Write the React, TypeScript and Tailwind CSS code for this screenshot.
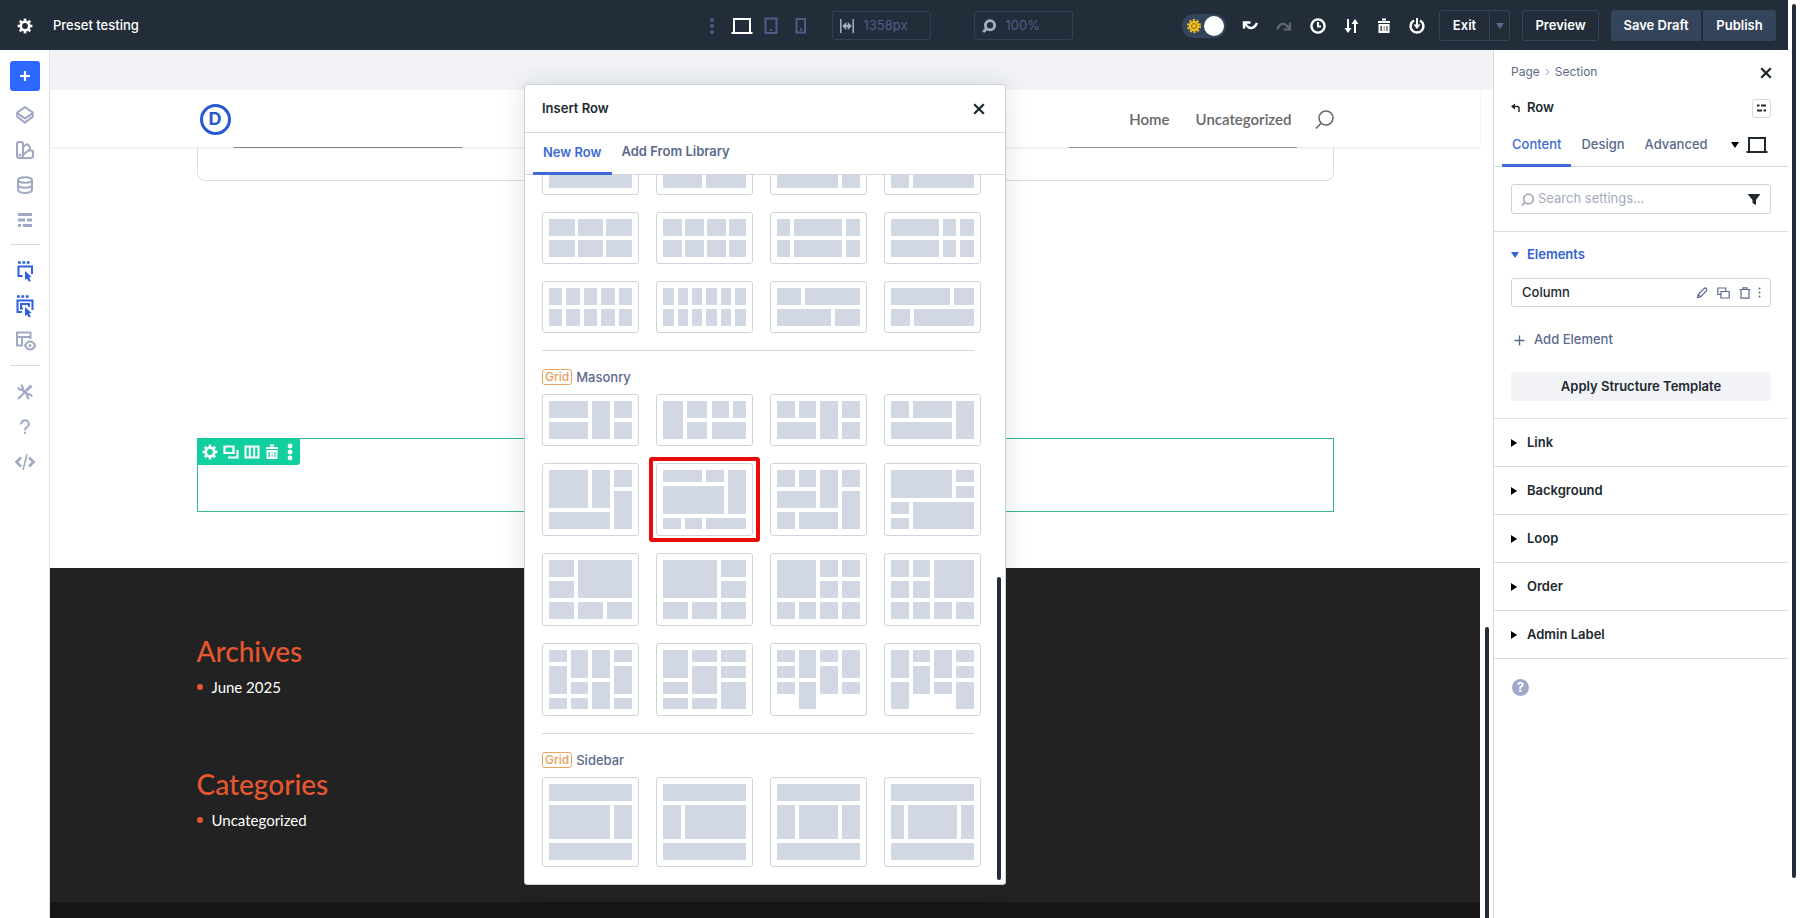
import { useState } from "react";
import type { ReactNode } from "react";

type Block = [number, number, number, number];

type LayoutRow = {
  height: number;
  items: Block[][];
};

// one column of blocks sharing the same x and width
const col = (x: number, w: number, spans: [number, number][]): Block[] =>
  spans.map(([y, h]) => [x, y, w, h] as Block);

// the same columns repeated on two lines
const twice = (cols: [number, number][]): Block[] =>
  cols.flatMap(([x, w]) => col(x, w, [[0, 17], [21, 17]]));

const THIRDS: [number, number][] = [[0, 17], [21, 17], [42, 17]];

const gridRows: LayoutRow[] = [
  {
    height: 38,
    items: [
      twice([[0, 83]]),
      twice([[0, 39], [43, 40]]),
      twice([[0, 61], [65, 18]]),
      twice([[0, 18], [22, 61]]),
    ],
  },
  {
    height: 38,
    items: [
      twice([[0, 26], [29, 25], [57, 26]]),
      twice([[0, 19], [22, 19], [44, 19], [66, 17]]),
      twice([[0, 13], [17, 48], [69, 14]]),
      twice([[0, 48], [52, 13], [69, 14]]),
    ],
  },
  {
    height: 38,
    items: [
      twice([[0, 13], [17, 14], [35, 13], [52, 14], [70, 13]]),
      twice([[0, 11], [15, 10], [29, 10], [43, 11], [58, 10], [72, 11]]),
      [[0, 0, 24, 17], [28, 0, 55, 17], [0, 21, 54, 17], [58, 21, 25, 17]],
      [[0, 0, 59, 17], [63, 0, 20, 17], [0, 21, 19, 17], [23, 21, 60, 17]],
    ],
  },
];

const masonryRows: LayoutRow[] = [
  {
    height: 38,
    items: [
      [...twice([[0, 39], [65, 18]]), [43, 0, 18, 38]],
      [[0, 0, 20, 38], ...twice([[24, 20]]), [49, 0, 17, 17], [70, 0, 13, 17], [49, 21, 34, 17]],
      [[0, 0, 18, 17], [22, 0, 17, 17], [0, 21, 39, 17], [43, 0, 18, 38], ...twice([[65, 18]])],
      [[0, 0, 18, 17], [22, 0, 39, 17], [0, 21, 61, 17], [65, 0, 18, 38]],
    ],
  },
  {
    height: 59,
    items: [
      [[0, 0, 39, 38], [43, 0, 18, 38], [65, 0, 18, 17], [65, 21, 18, 38], [0, 42, 61, 17]],
      [
        [0, 0, 39, 12], [43, 0, 18, 12], [65, 0, 18, 44], [0, 16, 61, 28],
        [0, 48, 18, 11], [22, 48, 17, 11], [43, 48, 40, 11],
      ],
      [
        [0, 0, 18, 17], [22, 0, 17, 17], [0, 21, 39, 17], [43, 0, 18, 38],
        [65, 0, 18, 17], [65, 21, 18, 38], [0, 42, 18, 17], [22, 42, 39, 17],
      ],
      [
        [0, 0, 61, 28], [65, 0, 18, 12], [65, 16, 18, 12],
        [0, 32, 18, 12], [0, 48, 18, 11], [22, 32, 61, 27],
      ],
    ],
  },
  {
    height: 59,
    items: [
      [...col(0, 25, THIRDS), [29, 0, 54, 38], [29, 42, 25, 17], [58, 42, 25, 17]],
      [[0, 0, 54, 38], [0, 42, 25, 17], [29, 42, 25, 17], ...col(58, 25, THIRDS)],
      [[0, 0, 39, 38], [0, 42, 18, 17], [22, 42, 17, 17], ...col(43, 18, THIRDS), ...col(65, 18, THIRDS)],
      [...col(0, 18, THIRDS), ...col(22, 17, THIRDS), [43, 0, 40, 38], [43, 42, 18, 17], [65, 42, 18, 17]],
    ],
  },
  {
    height: 59,
    items: [
      [
        ...col(0, 18, [[0, 12], [16, 28], [48, 11]]),
        ...col(22, 17, [[0, 28], [32, 12], [48, 11]]),
        ...col(43, 18, [[0, 28], [32, 27]]),
        ...col(65, 18, [[0, 12], [16, 28], [48, 11]]),
      ],
      [
        ...col(0, 25, [[0, 28], [32, 12], [48, 11]]),
        ...col(29, 25, [[0, 12], [16, 28], [48, 11]]),
        ...col(58, 25, [[0, 12], [16, 12], [32, 27]]),
      ],
      [
        ...col(0, 18, [[0, 12], [16, 12], [32, 12]]),
        ...col(22, 17, [[0, 28], [32, 27]]),
        ...col(43, 18, [[0, 12], [16, 28]]),
        ...col(65, 18, [[0, 28], [32, 12]]),
      ],
      [
        ...col(0, 18, [[0, 28], [32, 27]]),
        ...col(22, 17, [[0, 12], [16, 28]]),
        ...col(43, 18, [[0, 28], [32, 12]]),
        ...col(65, 18, [[0, 12], [16, 12], [32, 27]]),
      ],
    ],
  },
];

const sidebarCard = (middle: [number, number][]): Block[] => [
  [0, 0, 83, 17],
  ...middle.map(([x, w]) => [x, 21, w, 34] as Block),
  [0, 59, 83, 17],
];

const sidebarRows: LayoutRow[] = [
  {
    height: 76,
    items: [
      sidebarCard([[0, 61], [65, 18]]),
      sidebarCard([[0, 18], [22, 61]]),
      sidebarCard([[0, 18], [22, 39], [65, 18]]),
      sidebarCard([[0, 13], [17, 49], [70, 13]]),
    ],
  },
];

/* ---------- icons ---------- */

function Icon({ w = 18, h = w, sw = 2, children }: { w?: number; h?: number; sw?: number; children: ReactNode }) {
  return (
    <svg
      width={w} height={h} viewBox={`0 0 ${w} ${h}`} fill="none"
      stroke="currentColor" strokeWidth={sw} aria-hidden className="shrink-0"
    >
      {children}
    </svg>
  );
}

function Gear() {
  return (
    <Icon w={16} sw={2.6}>
      <circle cx="8" cy="8" r="4.2" />
      {[0, 45, 90, 135, 180, 225, 270, 315].map((a) => (
        <path key={a} d="M8 0.6v2.6" transform={`rotate(${a} 8 8)`} />
      ))}
    </Icon>
  );
}

function Trash() {
  return (
    <Icon w={14} h={16}>
      <path d="M1 4h12M5 1.5h4" />
      <path d="M2.5 7v7h9V7zM5.8 8v5M8.4 8v5" />
    </Icon>
  );
}

function Close() {
  return (
    <Icon w={12} sw={2.3}>
      <path d="M1.2 1.2l9.6 9.6M10.8 1.2L1.2 10.8" />
    </Icon>
  );
}

function Laptop() {
  return (
    <Icon w={22} h={18}>
      <path d="M3 15V2h16v13M0.5 16h21" />
    </Icon>
  );
}

function Lens() {
  return (
    <Icon w={14} sw={2.8}>
      <circle cx="8" cy="6.2" r="4.6" />
      <path d="M4.6 9.6L1.2 13" />
    </Icon>
  );
}

function VDots({ r = 2 }: { r?: number }) {
  return (
    <svg width="6" height="18" viewBox="0 0 6 18" fill="currentColor" aria-hidden className="shrink-0">
      <circle cx="3" cy="3" r={r} />
      <circle cx="3" cy="9" r={r} />
      <circle cx="3" cy="15" r={r} />
    </svg>
  );
}

const Layers = () => (
  <Icon>
    <path d="M9 1.2L16.6 6.4a.6.6 0 010 1L9 12.4 1.4 7.4a.6.6 0 010-1z" strokeLinejoin="round" />
    <path d="M1.2 7v3.6L9 16.6l7.800-6V7" strokeLinejoin="round" />
  </Icon>
);

const Swatches = () => (
  <Icon>
    <rect x="1" y="1" width="6" height="16" rx="2" />
    <path d="M7 6l3-2.300a1.800 1.800 0 012.600.400l1.200 1.700a2 2 0 01-.4 2.600L7 14" />
    <path d="M13 9.400l2.200-.2a1.800 1.800 0 011.800 1.800v3.600A2.200 2.200 0 0114.800 17H5" />
    <circle cx="4" cy="14" r=".5" />
  </Icon>
);

const Database = () => (
  <Icon>
    <ellipse cx="9" cy="4" rx="7" ry="2.8" />
    <path d="M2 4v10c0 1.600 3 3 7 3s7-1.400 7-3V4" />
    <path d="M2 9c0 1.500 3 2.700 7 2.700s7-1.200 7-2.700" />
  </Icon>
);

const Lines = () => (
  <Icon sw={3}>
    <path d="M2 3.500h14M2 9h7M11 9h5M2 14.500h3M7 14.500h9" />
  </Icon>
);

const Cursor = ({ x, y }: { x: number; y: number }) => (
  <path
    d="M0 0v9l2-1.600 1.800 3.400 2-1-1.700-3.200L6.600 6z"
    transform={`translate(${x} ${y})`} fill="currentColor" stroke="none"
  />
);

const ClickOne = () => (
  <Icon w={18} h={22}>
    <path d="M2 2.500h12" strokeWidth="2.600" strokeDasharray="2.800 1.600" />
    <path d="M6.500 16H2.500V6.500h13.500V14" />
    <Cursor x={9} y={11} />
  </Icon>
);

const ClickMany = () => (
  <Icon w={18} h={22}>
    <path d="M1 1.500h12" strokeWidth="2.600" strokeDasharray="2.800 1.600" />
    <path d="M6 17H1.500V5.500H16.500V15" />
    <path d="M7 13.500H5V9h8v3" />
    <Cursor x={9} y={12} />
  </Icon>
);

const GridEye = () => (
  <Icon w={22} h={20}>
    <path d="M9 14.500H3V1.500h13.500V8M3 6h13.500M8 6v8.500" />
    <path d="M11 14.500c1.500-2.700 3.300-4 5.200-4s3.700 1.300 4.800 4c-1.100 2.700-2.900 4-4.800 4s-3.700-1.300-5.200-4z" />
    <circle cx="16" cy="14.500" r=".6" />
  </Icon>
);

const Tools = () => (
  <Icon w={16} sw={2}>
    <path d="M1 15L10.500 5.500" />
    <path d="M10 6l4.500-4.500" strokeWidth="3" />
    <path d="M5 5l6 6" strokeWidth="2.600" />
    <path d="M1.300 3.200A2.700 2.700 0 003.400 5.800 2.700 2.700 0 005.800 3.400 2.700 2.700 0 003.600 1.200" />
    <path d="M14.700 12.800a2.700 2.700 0 00-2.100-2.600 2.700 2.700 0 00-2.400 2.400 2.700 2.700 0 002.200 2.200" />
  </Icon>
);

const Question = () => (
  <Icon w={12} h={16}>
    <path d="M2.200 5.400a3.800 3.800 0 117 1.600C8 8.500 6 8.600 6 11.200" />
    <path d="M6 12.800v2" />
  </Icon>
);

const Code = () => (
  <Icon w={22} h={18} sw={2.6}>
    <path d="M7 4.500L2.500 9 7 13.500M15 4.500L19.500 9 15 13.500" />
    <path d="M13 1L9 17" strokeWidth="1.600" />
  </Icon>
);

/* ---------- top bar ---------- */

const barButton = "flex h-[31px] items-center justify-center rounded-[3px] border border-[#364357] text-[13px] font-semibold text-white";

function TopBar() {
  return (
    <header className="flex h-[50px] shrink-0 items-center bg-[#232d39] pt-px text-white">
      <div className="flex flex-1 items-center gap-5 pl-[17px] text-[13px] font-medium">
        <button aria-label="Page settings"><Gear /></button>
        <span>Preset testing</span>
      </div>

      <div className="mr-3 flex items-center text-[#4f5d8a]">
        <button aria-label="More views" className="mr-4"><VDots /></button>
        <button aria-label="Desktop view" className="mr-[11px] text-white"><Laptop /></button>
        <button aria-label="Tablet view" className="mr-[17px]">
          <Icon w={14} h={18}><path d="M1.500 1.500h11v14.500h-11zM6 13h2" /></Icon>
        </button>
        <button aria-label="Phone view" className="mr-[25px]">
          <Icon w={12} h={18}><path d="M1.500 2h8.500v13.500H1.500zM5 12.500h2" /></Icon>
        </button>
        <label className="mr-[43px] flex h-[29px] w-[99px] items-center gap-2.5 rounded-[3px] border border-[#343f55] pl-[7px]">
          <span className="text-[#a4aec5]">
            <Icon w={14} h={14} sw={1.500}>
              <path d="M.8 0v14M13.200 0v14" />
              <path d="M4 7h6" strokeWidth="2.400" />
              <path d="M2.200 7l4-4v8zM11.800 7l-4-4v8z" fill="currentColor" stroke="none" />
            </Icon>
          </span>
          <input aria-label="Viewport width" defaultValue="1358px" className="w-14 min-w-0 bg-transparent text-[13px] outline-none" />
        </label>
        <label className="flex h-[29px] w-[99px] items-center gap-2.5 rounded-[3px] border border-[#343f55] pl-[7px]">
          <span className="text-[#a4aec5]"><Lens /></span>
          <input aria-label="Zoom" defaultValue="100%" className="w-14 min-w-0 bg-transparent text-[13px] outline-none" />
        </label>
      </div>

      <div className="flex flex-1 items-center justify-end pr-3">
        <button role="switch" aria-checked="true" aria-label="Light mode" className="mr-4 flex h-6 w-11 items-center justify-between rounded-full bg-[#34445a] px-0.5">
          <span className="pl-[3px] text-[#f2c021]">
            <Icon w={14} sw={1.800}>
              <circle cx="7" cy="7" r="4.300" fill="currentColor" />
              <circle cx="7" cy="7" r="6.100" strokeDasharray="2.200 1.633" />
              <circle cx="7" cy="7" r="2.500" stroke="#8a6c1c" strokeWidth="1" />
            </Icon>
          </span>
          <span className="size-5 rounded-full bg-white" />
        </button>
        <div className="mr-3.5 flex items-center gap-[18px]">
          <button aria-label="Undo">
            <Icon w={16} h={14} sw={2.400}>
              <path d="M2 9.500V3.500h6.500" />
              <path d="M2.500 4L5 7c3 3.500 7.500 2.500 10-3" />
            </Icon>
          </button>
          <button aria-label="Redo" className="text-[#5e6773]">
            <Icon w={16} h={14} sw={2.200}>
              <path d="M14 3.500v7H7.500" />
              <path d="M1.500 10.500C3.500 3.500 9 2.500 13.500 10" />
            </Icon>
          </button>
          <button aria-label="History">
            <Icon w={16}>
              <circle cx="8" cy="8" r="6.600" strokeWidth="2.400" />
              <path d="M8 4v4.500h3" />
            </Icon>
          </button>
          <button aria-label="Portability">
            <Icon w={15} h={16}>
              <path d="M4 1v10M11 15V5" />
              <path d="M.5 10h7L4 15zM7.500 6h7L11 1z" fill="currentColor" stroke="none" />
            </Icon>
          </button>
          <button aria-label="Clear layout"><Trash /></button>
          <button aria-label="Save to library">
            <Icon w={16} sw={2.400}>
              <path d="M5 2.500a6.400 6.400 0 106 0" />
              <path d="M8 0v8" strokeWidth="2" />
              <path d="M4.500 6.500h7L8 11z" fill="currentColor" stroke="none" />
            </Icon>
          </button>
        </div>
        <div className="mr-3 flex">
          <button className={`${barButton} w-[51px] rounded-r-none`}>Exit</button>
          <button aria-label="Exit options" className={`${barButton} w-5 rounded-l-none border-l-0`}>
            <svg width="8" height="6" className="fill-[#5b698c]" aria-hidden><path d="M0 0h8L4 6z" /></svg>
          </button>
        </div>
        <button className={`${barButton} mr-3 w-[77px]`}>Preview</button>
        <button className="h-[31px] w-[90px] rounded-l-[3px] bg-[#34445a] text-[13px] font-semibold">Save Draft</button>
        <button className="ml-0.5 h-[31px] w-[73px] rounded-r-[3px] bg-[#34445a] text-[13px] font-semibold">Publish</button>
      </div>
    </header>
  );
}

/* ---------- left rail ---------- */

const railGroups = [
  [
    { label: "Layers", icon: <Layers /> },
    { label: "Presets", icon: <Swatches /> },
    { label: "Variables", icon: <Database /> },
    { label: "Structure", icon: <Lines /> },
  ],
  [
    { label: "Click mode", icon: <ClickOne />, active: true },
    { label: "Parent click mode", icon: <ClickMany />, active: true },
    { label: "Wireframe", icon: <GridEye /> },
  ],
  [
    { label: "Tools", icon: <Tools /> },
    { label: "Help", icon: <Question /> },
    { label: "Code", icon: <Code /> },
  ],
];

function Rail() {
  return (
    <nav aria-label="Builder tools" className="flex w-[50px] shrink-0 flex-col items-center border-r border-[#dfe1e8] bg-white pt-[11px] text-[#a0a9c4]">
      <button aria-label="Add" className="mb-1.5 flex size-[30px] items-center justify-center rounded-[3px] bg-[#2e69ff] text-white">
        <Icon w={12} sw={2.200}><path d="M6 1v10M1 6h10" /></Icon>
      </button>
      {railGroups.map((group, i) => (
        <div key={i} className={i === 0 ? "flex flex-col" : "mt-[7px] flex w-[30px] flex-col items-center border-t border-[#d5d9e2] pt-2"}>
          {group.map((item) => (
            <button
              key={item.label} aria-label={item.label}
              className={`flex h-[35px] w-[30px] items-center justify-center ${"active" in item ? "text-[#2e62e0]" : ""}`}
            >
              {item.icon}
            </button>
          ))}
        </div>
      ))}
    </nav>
  );
}

/* ---------- insert row dialog ---------- */

function LayoutCard({ blocks, height, selected, label }: { blocks: Block[]; height: number; selected?: boolean; label: string }) {
  return (
    <button aria-label={label} className="relative rounded-[3px] border border-[#d0d5dd] p-1.5">
      <svg viewBox={`0 0 83 ${height}`} className="block w-full fill-[#d1d7e3]" shapeRendering="crispEdges" aria-hidden>
        {blocks.map(([x, y, w, h]) => (
          <rect key={`${x}-${y}`} x={x} y={y} width={w} height={h} />
        ))}
      </svg>
      {selected && <span className="absolute -inset-x-2 -inset-y-[7px] rounded-[3px] border-4 border-[#e90b0b]" />}
    </button>
  );
}

function LayoutSection({ title, rows, selected }: { title?: string; rows: LayoutRow[]; selected?: string }) {
  return (
    <section className="shrink-0">
      {title && (
        <div className="mt-[17px] mr-[7px] mb-[9px] flex items-center gap-1 border-t border-[#d5d9df] pt-[18px]">
          <span className="rounded-[3px] border border-[#eba462] px-0.5 text-xs leading-[14px] font-medium text-[#e9a05c]">Grid</span>
          <h3 className="text-[13px] leading-4 font-medium text-[#5b6a8c]">{title}</h3>
        </div>
      )}
      <div className="grid grid-cols-4 gap-[17px]">
        {rows.map((row, r) =>
          row.items.map((blocks, c) => (
            <LayoutCard
              key={`${r}-${c}`} blocks={blocks} height={row.height}
              label={`${title ?? "Equal"} layout ${r * 4 + c + 1}`} selected={selected === `${r}-${c}`}
            />
          )),
        )}
      </div>
    </section>
  );
}

function InsertRowDialog() {
  return (
    <div
      role="dialog" aria-label="Insert Row"
      className="absolute inset-x-0 top-[34px] bottom-[33px] z-20 mx-auto flex w-[482px] flex-col rounded-[3px] border border-[#ccd2da] bg-white shadow-[0_0_24px_rgba(40,50,70,0.14)]"
    >
      <div className="flex h-12 shrink-0 items-center justify-between border-b border-[#d5dae0] pr-5 pl-[17px]">
        <h2 className="text-[13px] font-semibold text-[#20292f]">Insert Row</h2>
        <button aria-label="Close" className="text-[#20292f]"><Close /></button>
      </div>
      <div className="flex h-[42px] shrink-0 border-b border-[#d5dae0] pl-2 text-[13px] font-semibold">
        <button className="-mb-px border-b-3 border-[#3e6ad6] px-2.5 text-[#3e6ad6]">New Row</button>
        <button className="border-b-3 border-transparent px-2.5 text-[#5b6a8c]">Add From Library</button>
      </div>
      <div className="relative flex min-h-0 flex-1 flex-col justify-end overflow-hidden pr-6 pb-[17px] pl-[17px]">
        <LayoutSection rows={gridRows} />
        <LayoutSection title="Masonry" rows={masonryRows} selected="1-1" />
        <LayoutSection title="Sidebar" rows={sidebarRows} />
        <span className="absolute right-1 bottom-1 h-[303px] w-1 rounded-full bg-[#232d39]" />
      </div>
    </div>
  );
}

/* ---------- page preview ---------- */

const container = "mx-auto w-4/5 max-w-[1137px]";

function FooterList({ title, item }: { title: string; item: string }) {
  return (
    <div className="h-[133px]">
      <h4 className="text-[28px] leading-8 font-medium text-[#e8562f]">{title}</h4>
      <ul className="mt-2">
        <li className="flex items-center gap-[9px] text-[15px] leading-6 text-white">
          <span className="size-1.5 rounded-full bg-[#e8562f]" />
          <a href="#">{item}</a>
        </li>
      </ul>
    </div>
  );
}

function Canvas() {
  return (
    <main className="relative flex min-w-0 flex-1 bg-white">
      <div className="absolute inset-x-0 top-0 h-10 bg-[#f1f3f7]" />
      <div className="flex min-w-0 flex-1 flex-col pt-10 font-['Lato',sans-serif]">
        <div className="relative z-10 h-[57px] shrink-0 bg-white shadow-[0_1px_2px_rgba(0,0,0,0.1)]">
          <div className={`${container} flex h-full items-center pt-px pl-[3px]`}>
            <span className="flex size-[31px] items-center justify-center rounded-full border-[3px] border-[#2759cf] font-['Inter',sans-serif] text-lg leading-none font-bold text-[#2759cf]">
              D
            </span>
            <nav aria-label="Site" className="ml-auto flex items-center gap-[26px] text-[15px] font-semibold text-[#666]">
              <a href="#">Home</a>
              <a href="#">Uncategorized</a>
              <button aria-label="Search" className="-ml-[3px]">
                <Icon w={19} sw={1.500}>
                  <circle cx="11" cy="8" r="7" />
                  <path d="M6.200 13L1 18.500" />
                </Icon>
              </button>
            </nav>
          </div>
        </div>

        <div className={`${container} shrink-0`}>
          <div className="flex h-[34px] items-start justify-between rounded-b-lg border border-t-0 border-[#dcdde0] px-9">
            <span className="h-px w-[228px] bg-[#8f8a88]" />
            <span className="h-px w-[228px] bg-[#98a3a6]" />
          </div>
        </div>

        <div className={`${container} mt-[257px] shrink-0`}>
          <div className="h-[74px] border border-[#35b696]">
            <div className="-mt-px -ml-px flex h-[27px] w-[103px] items-center gap-[5px] rounded-r-[3px] rounded-tl-[3px] bg-[#12cfa0] pr-[7px] pl-[5px] text-white">
              <button aria-label="Row settings"><Gear /></button>
              <button aria-label="Duplicate row">
                <Icon w={16} h={14}><path d="M1.500 1.500h9v6.500h-9zM5 12.500h9.500V5" strokeWidth="2.200" /></Icon>
              </button>
              <button aria-label="Row structure">
                <Icon w={16} h={14}><path d="M1.500 1.500h13v11h-13zM5.800 1.500v11M10.200 1.500v11" /></Icon>
              </button>
              <button aria-label="Delete row"><Trash /></button>
              <button aria-label="More row actions" className="ml-auto"><VDots r={2.400} /></button>
            </div>
          </div>
        </div>

        <footer className="mt-14 flex flex-1 flex-col bg-[#222]">
          <div className={`${container} flex-1 pt-[67px]`}>
            <FooterList title="Archives" item="June 2025" />
            <FooterList title="Categories" item="Uncategorized" />
          </div>
          <div className="h-4 bg-[#161616]" />
        </footer>
      </div>
      <div className="relative flex w-[13px] shrink-0 flex-col items-center justify-end">
        <span className="h-[291px] w-1 rounded-t-full bg-[#232d39]" />
      </div>
      <div className="absolute inset-y-0 right-[13px] left-0 z-20">
        <InsertRowDialog />
      </div>
    </main>
  );
}

/* ---------- settings panel ---------- */

const tabs = ["Content", "Design", "Advanced"];

function SettingsPanel() {
  const [tab, setTab] = useState("Content");

  return (
    <aside className="relative z-30 flex w-[295px] shrink-0 flex-col border-l border-[#d5d9e8] bg-white text-[13px] text-[#20292f]">
      <div className="mt-3 flex h-5 items-center justify-between pr-4 pl-[17px] text-xs text-[#5b6a8c]">
        <div className="flex items-center gap-[5px]">
          <a href="#">Page</a>
          <svg width="5" height="8" viewBox="0 0 5 8" className="fill-none stroke-[#9aa4bd]" aria-hidden><path d="M1 1l3 3-3 3" /></svg>
          <a href="#">Section</a>
        </div>
        <button aria-label="Close panel" className="pt-px text-[#20292f]"><Close /></button>
      </div>

      <div className="mt-4 flex h-5 items-center justify-between px-[17px]">
        <div className="flex items-center gap-[7px]">
          <button aria-label="Back">
            <Icon w={9} h={10} sw={1.500}>
              <path d="M1 3.500h5.500a1.500 1.500 0 011.500 1.500v4" />
              <path d="M0 3.500L4 .5v6z" fill="currentColor" stroke="none" />
            </Icon>
          </button>
          <h2 className="font-semibold">Row</h2>
        </div>
        <button aria-label="Panel layout" className="flex size-[19px] items-center justify-center rounded-[3px] border border-[#d5d9e2]">
          <Icon w={9} h={8} sw={2}><path d="M0 1.500h2.500M4 1.500h5M0 6.500h5M6.500 6.500H9" /></Icon>
        </button>
      </div>

      <div className="mt-[5px] flex h-[44px] items-stretch border-b border-[#d5d9e2] pl-2">
        {tabs.map((name) => (
          <button
            key={name} onClick={() => setTab(name)}
            className={`-mb-px border-b-3 px-2.5 pt-[3px] font-medium ${
              tab === name ? "border-[#3e6ad6] text-[#3e6ad6]" : "border-transparent text-[#5b6a8c]"
            }`}
          >
            {name}
          </button>
        ))}
        <button aria-label="Responsive view" className="ml-auto flex items-center gap-[7px] pr-5">
          <svg width="8" height="6" aria-hidden><path d="M0 0h8L4 6z" /></svg>
          <Laptop />
        </button>
      </div>

      <div className="border-b border-[#dadfe3] px-[17px] py-[17px]">
        <label className="flex h-[30px] items-center rounded-[3px] border border-[#cfd4da] pr-2.5 pl-[9px] text-[#a3abbd]">
          <Icon w={13} sw={1.800}>
            <circle cx="7.500" cy="6" r="4.800" />
            <path d="M4 9.500L1 12.500" />
          </Icon>
          <input aria-label="Search settings" placeholder="Search settings..." className="min-w-0 flex-1 bg-transparent pl-1 text-[13px] placeholder-[#a3abbd] outline-none" />
          <svg width="12" height="11" viewBox="0 0 12 11" className="fill-[#20292f]" aria-hidden><path d="M.5 0h11a.5.500 0 01.4.800L8 6v5L4.500 9V6L.1.800A.5.500 0 01.5 0z" /></svg>
        </label>
      </div>

      <section className="border-b border-[#dadfe3] px-[17px] pt-[13px] pb-[17px]">
        <button className="flex h-5 items-center gap-2 font-semibold text-[#3162d2]">
          <svg width="8" height="6" className="fill-current" aria-hidden><path d="M0 0h8L4 6z" /></svg>
          Elements
        </button>
        <div className="mt-[13px] flex h-[29px] items-center rounded-[3px] border border-[#cfd4da] pr-[9px] pl-2.5">
          <span className="mr-auto font-medium">Column</span>
          <div className="flex items-center gap-[9px] text-[#5b6a8c]">
            <button aria-label="Edit column">
              <Icon w={12} sw={1.200}><path d="M1.500 10.500l.6-3L8 1.600a1.600 1.600 0 012.400 2.300L4.500 9.900zM2.200 7.500l2.300 2.400" /></Icon>
            </button>
            <button aria-label="Duplicate column">
              <Icon w={13} h={12} sw={1.200}><path d="M4 7.500H.8V1h8v3M4 4.500h8.200v6.500H4z" /></Icon>
            </button>
            <button aria-label="Delete column">
              <Icon w={12} sw={1.200}><path d="M.5 2.500h11M4 2.500V.8h4v1.700M2 2.500v8.700h8V2.500" /></Icon>
            </button>
            <button aria-label="More column actions" className="-ml-0.5">
              <svg width="3" height="11" className="fill-current" aria-hidden>
                <circle cx="1.500" cy="1.500" r="1" /><circle cx="1.500" cy="5.500" r="1" /><circle cx="1.500" cy="9.500" r="1" />
              </svg>
            </button>
          </div>
        </div>
        <button className="mt-[23px] flex h-5 items-center gap-[9px] pl-[3px] font-medium text-[#5b6a8c]">
          <Icon w={11} sw={1.400}><path d="M5.500 .5v10M.5 5.500h10" /></Icon>
          Add Element
        </button>
        <button className="mt-[22px] h-[29px] w-full rounded-[3px] bg-[#f1f3f7] font-semibold">Apply Structure Template</button>
      </section>

      {["Link", "Background", "Loop", "Order", "Admin Label"].map((name) => (
        <button key={name} className="flex h-12 shrink-0 items-center gap-2.5 border-b border-[#d8dde0] pl-[17px] font-semibold">
          <svg width="6" height="8" aria-hidden><path d="M0 0v8l6-4z" /></svg>
          {name}
        </button>
      ))}

      <button aria-label="Help" className="mt-5 ml-[18px] flex size-[17px] items-center justify-center rounded-full bg-[#a0a9c9] text-[13px] font-bold text-white">
        ?
      </button>
    </aside>
  );
}

export default function App() {
  return (
    <div className="flex h-screen overflow-hidden bg-white font-['Inter',sans-serif]">
      <div className="flex min-w-0 flex-1 flex-col">
        <TopBar />
        <div className="flex min-h-0 flex-1">
          <Rail />
          <Canvas />
          <SettingsPanel />
        </div>
      </div>
      <div className="flex w-3 shrink-0 justify-center pt-1 pb-10">
        <span className="w-1 rounded-full bg-[#232d39]" />
      </div>
    </div>
  );
}
